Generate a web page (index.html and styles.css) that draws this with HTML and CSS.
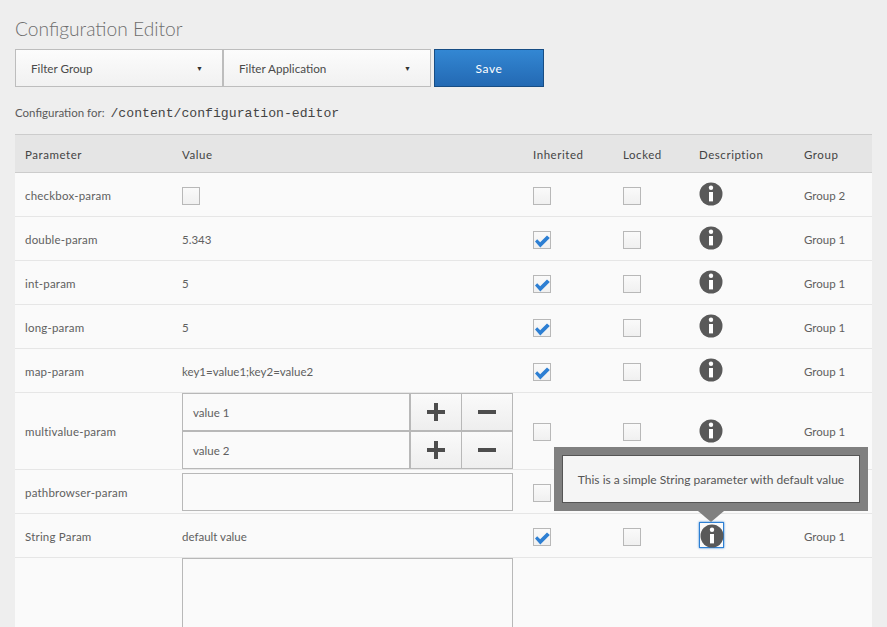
FILE: index.html
```html
<!DOCTYPE html>
<html lang="en">
<head>
<meta charset="utf-8">
<title>Configuration Editor</title>
<link rel="stylesheet" href="styles.css">
</head>
<body>
<svg class="defs" width="0" height="0" aria-hidden="true">
  <symbol id="info" viewBox="0 0 24 24">
    <circle cx="12" cy="12" r="11.5" fill="#595959"/>
    <circle cx="12" cy="5.8" r="2.2" fill="#fff"/>
    <path d="M10 10h4v9.4h-4z" fill="#fff"/>
  </symbol>
  <symbol id="check" viewBox="0 0 18 18">
    <path d="M2 9.5l2.2-2.2 3 3L14 3.5 16.8 6 7.3 15.5z" fill="#2d7fd3"/>
  </symbol>
</svg>
<h1 class="title">Configuration Editor</h1>
<div class="toolbar">
  <div class="select"><span>Filter Group</span><span class="caret">▼</span></div>
  <div class="select"><span>Filter Application</span><span class="caret">▼</span></div>
  <button class="save">Save</button>
</div>
<p class="config-for">Configuration for: <code class="path">/content/configuration-editor</code></p>
<table class="params">
  <colgroup>
    <col class="c-param"><col class="c-value"><col class="c-inh"><col class="c-lock"><col class="c-desc"><col class="c-group">
  </colgroup>
  <thead>
    <tr><th>Parameter</th><th>Value</th><th>Inherited</th><th>Locked</th><th>Description</th><th>Group</th></tr>
  </thead>
  <tbody>
    <tr>
      <td>checkbox-param</td><td><span class="box"></span></td>
      <td><span class="box"></span></td><td><span class="box"></span></td>
      <td><svg class="info"><use href="#info"/></svg></td><td>Group 2</td>
    </tr>
    <tr>
      <td>double-param</td><td>5.343</td>
      <td><span class="box"><svg class="tick"><use href="#check"/></svg></span></td><td><span class="box"></span></td>
      <td><svg class="info"><use href="#info"/></svg></td><td>Group 1</td>
    </tr>
    <tr>
      <td>int-param</td><td>5</td>
      <td><span class="box"><svg class="tick"><use href="#check"/></svg></span></td><td><span class="box"></span></td>
      <td><svg class="info"><use href="#info"/></svg></td><td>Group 1</td>
    </tr>
    <tr>
      <td>long-param</td><td>5</td>
      <td><span class="box"><svg class="tick"><use href="#check"/></svg></span></td><td><span class="box"></span></td>
      <td><svg class="info"><use href="#info"/></svg></td><td>Group 1</td>
    </tr>
    <tr>
      <td>map-param</td><td>key1=value1;key2=value2</td>
      <td><span class="box"><svg class="tick"><use href="#check"/></svg></span></td><td><span class="box"></span></td>
      <td><svg class="info"><use href="#info"/></svg></td><td>Group 1</td>
    </tr>
    <tr class="row-multi">
      <td>multivalue-param</td>
      <td>
        <div class="multi">
          <div class="field">value 1</div>
          <div class="btn"><svg class="sym" viewBox="0 0 18 18"><path d="M7 0h4v7h7v4h-7v7H7v-7H0V7h7z"/></svg></div>
          <div class="btn"><svg class="sym" viewBox="0 0 18 18"><path d="M0 7h18v4H0z"/></svg></div>
          <div class="field">value 2</div>
          <div class="btn"><svg class="sym" viewBox="0 0 18 18"><path d="M7 0h4v7h7v4h-7v7H7v-7H0V7h7z"/></svg></div>
          <div class="btn"><svg class="sym" viewBox="0 0 18 18"><path d="M0 7h18v4H0z"/></svg></div>
        </div>
      </td>
      <td><span class="box"></span></td><td><span class="box"></span></td>
      <td><svg class="info"><use href="#info"/></svg></td><td>Group 1</td>
    </tr>
    <tr>
      <td>pathbrowser-param</td><td class="cell-input"><div class="input"></div></td>
      <td><span class="box"></span></td><td><span class="box"></span></td>
      <td><svg class="info"><use href="#info"/></svg></td><td>Group 1</td>
    </tr>
    <tr>
      <td>String Param</td><td>default value</td>
      <td><span class="box"><svg class="tick"><use href="#check"/></svg></span></td><td><span class="box"></span></td>
      <td><span class="focus"><svg class="info"><use href="#info"/></svg></span></td><td>Group 1</td>
    </tr>
    <tr class="row-area">
      <td></td><td><div class="area"></div></td><td></td><td></td><td></td><td></td>
    </tr>
  </tbody>
</table>
<div class="tooltip">
  <div class="tooltip-inner">This is a simple String parameter with default value</div>
</div>
</body>
</html>
```
FILE: styles.css
```css
html { overflow: hidden; height: 627px; }
* { box-sizing: border-box; }
body {
  margin: 0;
  padding: 15px 15px 0;
  background: #eeeeee;
  font-family: Lato, "Open Sans", sans-serif;
  font-size: 11.5px;
  color: #555;
  position: relative;
  height: 627px;
  overflow: hidden;
}
.defs { position: absolute; }
.title {
  margin: 0;
  height: 34px;
  font-size: 19.2px;
  line-height: 27px;
  font-weight: 300;
  color: #6e6e6e;
}
.toolbar { display: flex; height: 38px; }
.select {
  width: 208px;
  border: 1px solid #bdbdbd;
  background: linear-gradient(#fcfcfc, #f1f1f1);
  display: flex;
  justify-content: space-between;
  align-items: center;
  padding: 0 19px 0 15px;
  color: #4a4a4a;
  font-size: 11.7px;
}
.caret { font-size: 7px; color: #333; }
.save {
  margin-left: 3px;
  width: 110px;
  border: 1px solid #174d84;
  background: linear-gradient(#3387d3, #2369b3);
  color: #fff;
  font-family: inherit;
  font-size: 12px;
  font-weight: 400;
  letter-spacing: .6px;
  padding: 0;
}
.config-for {
  margin: 0;
  height: 47px;
  padding-top: 17px;
  line-height: 18px;
  font-size: 11.5px;
  color: #5a5a5a;
}
.path { font-family: "Liberation Mono", monospace; font-size: 13.15px; color: #444; margin-left: 3px; }
.params {
  width: 857px;
  table-layout: fixed;
  border-collapse: separate;
  border-spacing: 0;
  background: #fafafa;
}
.c-param { width: 157px; }
.c-value { width: 351px; }
.c-inh { width: 90px; }
.c-lock { width: 76px; }
.c-desc { width: 105px; }
.c-group { width: 78px; }
th {
  height: 39px;
  background: #e5e5e5;
  border-top: 1px solid #cccccc;
  border-bottom: 1px solid #cccccc;
  text-align: left;
  padding: 2px 10px 0;
  font-size: 11.5px;
  font-weight: 400;
  letter-spacing: .55px;
  color: #444;
}
td {
  height: 44px;
  padding: 2px 10px 0;
  border-bottom: 1px solid #e6e6e6;
  color: #606060;
  vertical-align: middle;
}
td:first-child { letter-spacing: .2px; }
.box {
  display: block;
  position: relative;
  width: 18px;
  height: 18px;
  border: 1px solid #b8b8b8;
  background: linear-gradient(#fafafa, #f0f0f0);
}
.tick { position: absolute; left: -1px; top: 0; width: 18px; height: 18px; }
.info { display: block; width: 24px; height: 24px; margin-top: -4px; }
.focus {
  display: block;
  position: relative;
  width: 25px;
  height: 26px;
  margin-top: -3px;
  padding-top: 1px;
  border: 1px solid #2d7fd3;
  box-shadow: 0 0 2px #2d7fd3;
}
.focus .info { margin: 0; }
.row-multi td { height: 77px; }
.row-multi td:first-child, .row-multi td:last-child { padding-top: 0; }
.row-multi .info { margin-top: -2px; }
.multi {
  display: grid;
  grid-template-columns: 229px 51px 51px;
  grid-auto-rows: 38px;
  width: 331px;
  margin-top: -3px;
}
.field {
  border: 1px solid #b8b8b8;
  border-width: 1px 2px 1px 1px;
  background: #fafafa;
  line-height: 38px;
  padding-left: 10px;
  color: #606060;
}
.btn {
  border: 1px solid #b8b8b8;
  border-left-width: 0;
  background: linear-gradient(#fafafa, #eeeeee);
  display: flex;
  align-items: center;
  justify-content: center;
}
.sym { width: 18px; height: 18px; fill: #4d4d4d; }
.input {
  width: 331px;
  height: 38px;
  border: 1px solid #b8b8b8;
  background: #fafafa;
}
.cell-input { padding-top: 0; }
.row-area td { border-bottom: 0; height: 140px; vertical-align: top; padding-top: 0; }
.area {
  width: 331px;
  height: 130px;
  border: 1px solid #b8b8b8;
  background: #fafafa;
}
.tooltip {
  position: absolute;
  left: 554px;
  top: 447px;
  width: 314px;
  height: 64px;
  border: 8px solid #808080;
  background: #f5f5f5;
}
.tooltip::after {
  content: "";
  position: absolute;
  left: 136px;
  top: 56px;
  border: 13px solid transparent;
  border-top: 11px solid #808080;
  border-bottom: 0;
}
.tooltip-inner {
  height: 48px;
  border: 1px solid #555;
  display: flex;
  align-items: center;
  justify-content: center;
  font-size: 12px;
  color: #555;
  white-space: nowrap;
}
```
